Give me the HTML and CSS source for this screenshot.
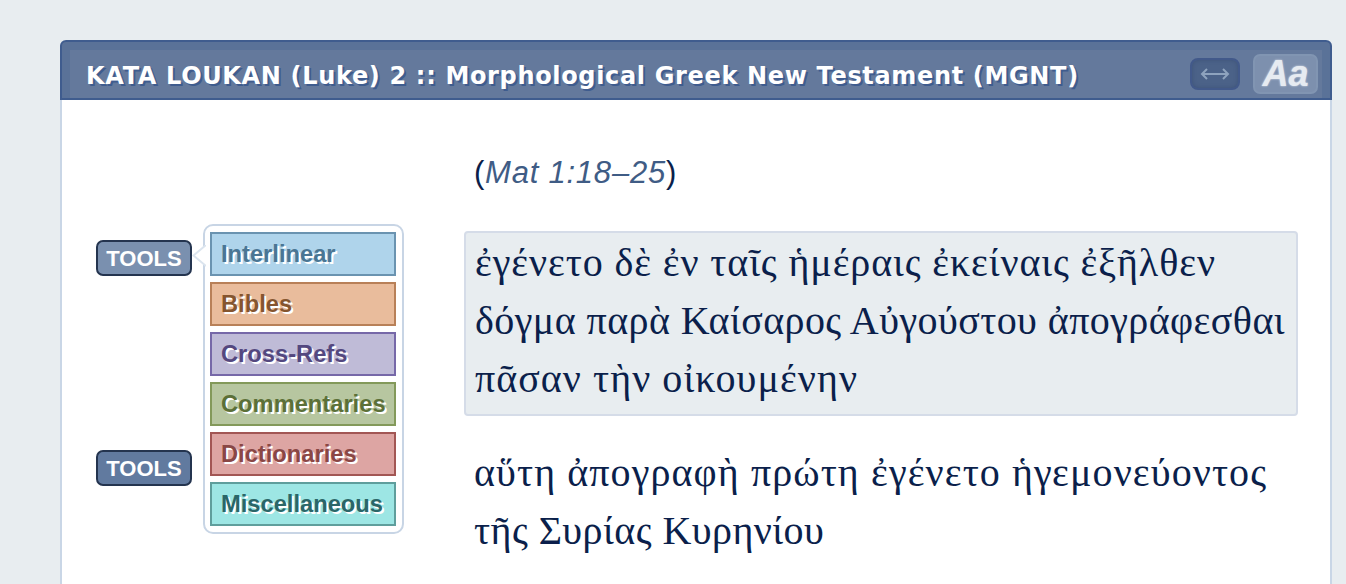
FILE: index.html
```html
<!DOCTYPE html>
<html lang="el">
<head>
<meta charset="utf-8">
<title>KATA LOUKAN (Luke) 2</title>
<link rel="stylesheet" href="styles.css">
</head>
<body>
<main class="panel">
  <header class="bar">
    <div class="bar-inner">
      <h1 class="title">KATA LOUKAN (Luke) 2 :: Morphological Greek New Testament (MGNT)</h1>
      <div class="bar-tools">
        <button class="width-btn" type="button" aria-label="Toggle width">
          <svg class="width-icon" viewBox="0 0 32 14" width="32" height="14"><path d="M8 2 3 7l5 5M24 2l5 5-5 5M3 7h26" fill="none" stroke="#8ea3be" stroke-width="2"/></svg>
        </button>
        <button class="font-btn" type="button">Aa</button>
      </div>
    </div>
  </header>
  <div class="content">
    <aside class="margin">
      <a class="tools tools-active">TOOLS</a>
      <a class="tools tools-second">TOOLS</a>
      <nav class="menu">
        <a class="item interlinear">Interlinear</a>
        <a class="item bibles">Bibles</a>
        <a class="item xrefs">Cross-Refs</a>
        <a class="item comm">Commentaries</a>
        <a class="item dict">Dictionaries</a>
        <a class="item misc">Miscellaneous</a>
      </nav>
      <svg class="pointer" viewBox="0 0 14 22" width="14" height="22"><path d="M14 0 1.5 10.5 14 21" fill="#fff" stroke="#dbe4ee" stroke-width="2"/></svg>
    </aside>
    <article class="text">
      <p class="ref">(<em>Mat 1:18–25</em>)</p>
      <p class="verse verse-on"><span class="line">ἐγένετο δὲ ἐν ταῖς ἡμέραις ἐκείναις ἐξῆλθεν</span><span class="line line-tight">δόγμα παρὰ Καίσαρος Αὐγούστου ἀπογράφεσθαι</span><span class="line line-short">πᾶσαν τὴν οἰκουμένην</span></p>
      <p class="verse"><span class="line line-wide">αὕτη ἀπογραφὴ πρώτη ἐγένετο ἡγεμονεύοντος</span><span class="line line-close">τῆς Συρίας Κυρηνίου</span></p>
    </article>
  </div>
</main>
</body>
</html>
```
FILE: styles.css
```css
* { box-sizing: border-box; }
html, body { margin: 0; height: 584px; overflow: hidden; }
body { background: #e8edf0; padding: 40px 14px 0 60px; font-family: "Liberation Sans", Arial, sans-serif; }
.panel { background: #fff; border-radius: 6px 6px 0 0; height: 544px; border: solid #c9d6e6; border-width: 0 2px; }
.bar { margin: 0 -2px; height: 60px; background: #5a7298; border: 2px solid #3f5c8e; border-radius: 6px 6px 0 0; padding: 8px 8px 0; }
.bar-inner { height: 48px; background: #64799c; display: flex; align-items: center; justify-content: space-between; padding: 0 4px 0 16px; }
.title { margin: 4px 0 0; font: bold 24px "DejaVu Sans", sans-serif; color: #fff; text-shadow: 2px 2px 0 #3f5c8e; letter-spacing: 0.66px; white-space: nowrap; }
.bar-tools { display: flex; align-items: center; gap: 13px; }
.width-btn { width: 50px; height: 32px; padding: 0; border: 2px solid #42598a; border-radius: 8px; background: #4b6288; box-shadow: inset 0 0 4px #3d5378; display: flex; align-items: center; justify-content: center; }
.font-btn { width: 65px; height: 40px; padding: 0; border: 2px solid #8195b2; border-radius: 7px; background: #7d90ae; color: #e6ebf1; font: italic bold 36px/36px "Liberation Sans", sans-serif; text-shadow: 0 0 2px #e6ebf1; }
.content { display: flex; }
.margin { position: relative; width: 402px; flex: none; padding: 140px 0 0 34px; }
.tools { display: block; width: 96px; height: 36px; border: 2px solid #24344f; border-radius: 7px; background: #617a9f; color: #fff; font: bold 22px/33px "Liberation Sans", sans-serif; text-align: center; }
.tools-active { background: #7a90af; }
.tools-second { margin-top: 174px; }
.menu { position: absolute; left: 141px; top: 124px; width: 201px; height: 310px; background: #fff; border: 2px solid #c8d5e5; border-radius: 10px; padding: 6px 6px 6px 5px; display: flex; flex-direction: column; gap: 6px; }
.pointer { position: absolute; left: 130px; top: 145px; }
.item { display: block; height: 44px; border: 2px solid; padding-left: 9px; font: bold 23.7px/40px "Liberation Sans", sans-serif; white-space: nowrap; text-shadow: 2px 2px 0 #fff; }
.interlinear { background: #afd4eb; border-color: #6a93b0; color: #4a7694; }
.bibles { background: #e9bc9c; border-color: #b88058; color: #85552f; }
.xrefs { background: #bfbbd7; border-color: #7668a8; color: #54487f; }
.comm { background: #b7c6a0; border-color: #83995a; color: #5c7038; }
.dict { background: #dda5a3; border-color: #a25654; color: #8a4745; }
.misc { background: #9de6e4; border-color: #5f9e9c; color: #2b6668; }
.text { flex: 1; padding: 0 32px 0 0; }
.ref { margin: 0; padding: 53px 0 0 10px; font-size: 31px; line-height: 40px; color: #0b1f4b; letter-spacing: 0.77px; }
.ref em { color: #3f5c85; }
.verse { margin: 0; padding: 0 10px; font: 40px/58px "Liberation Serif", serif; color: #0b1f4b; letter-spacing: 0.9px; }
.verse-on { margin-top: 38px; margin-bottom: 28px; height: 185px; padding: 1px 9px; background: #e8edf0; border: 2px solid #d5dce8; border-radius: 4px; }
.line { display: block; white-space: nowrap; }
.line-tight { letter-spacing: 0.43px; }
.line-short { letter-spacing: 1.05px; }
.line-wide { letter-spacing: 1.1px; }
.line-close { letter-spacing: 0.45px; }
```
